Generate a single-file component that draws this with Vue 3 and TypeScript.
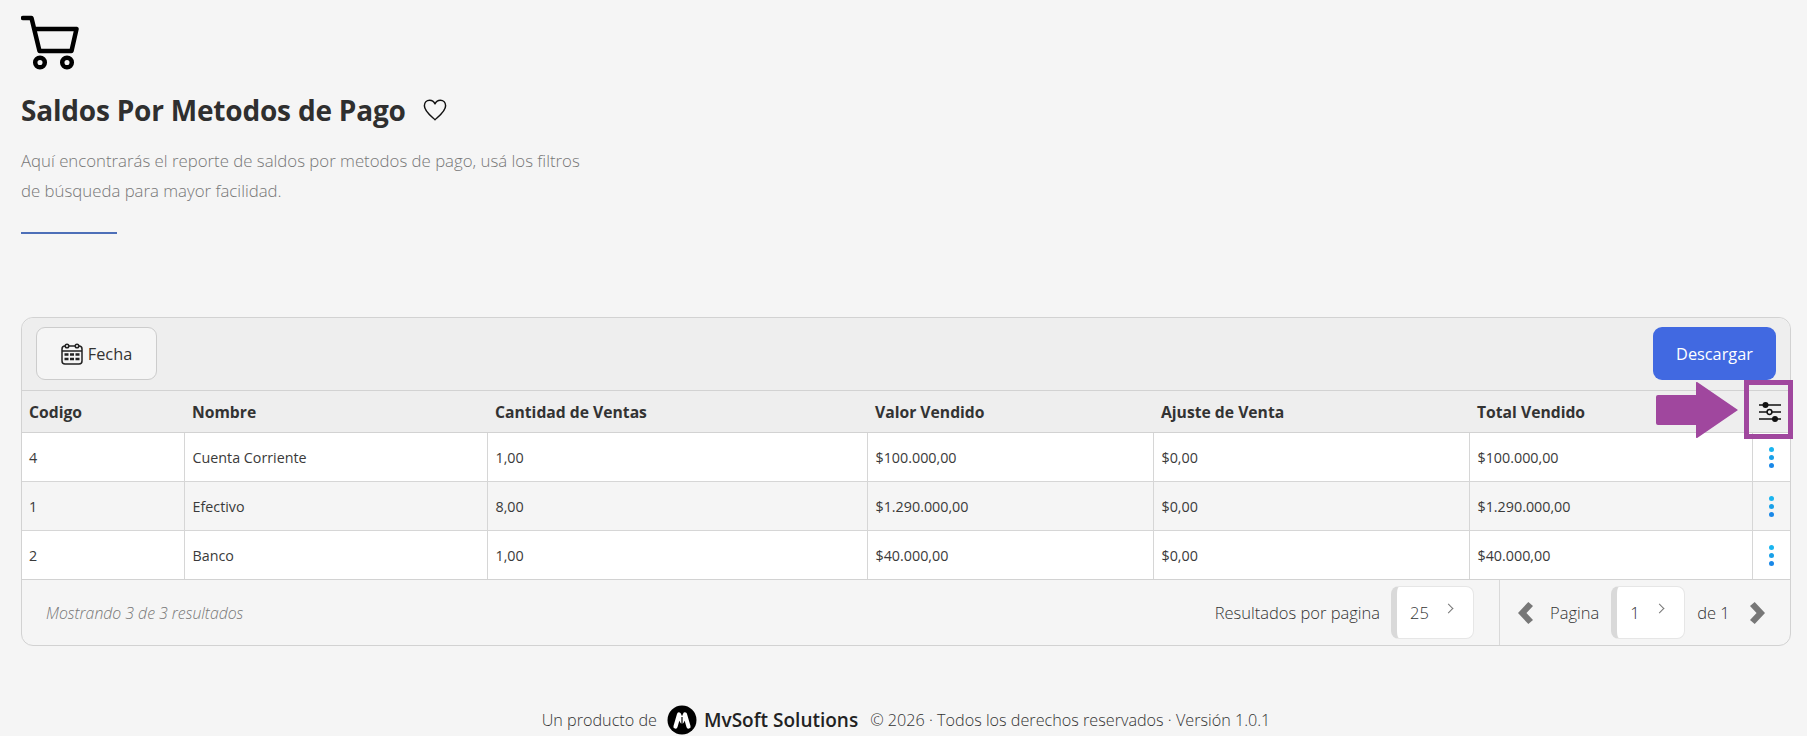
<script setup lang="ts">
interface Row { code: string; name: string; qty: string; value: string; adj: string; total: string }
const rows: Row[] = [
  { code: '4', name: 'Cuenta Corriente', qty: '1,00', value: '$100.000,00', adj: '$0,00', total: '$100.000,00' },
  { code: '1', name: 'Efectivo', qty: '8,00', value: '$1.290.000,00', adj: '$0,00', total: '$1.290.000,00' },
  { code: '2', name: 'Banco', qty: '1,00', value: '$40.000,00', adj: '$0,00', total: '$40.000,00' }
]
const heads = ['Codigo', 'Nombre', 'Cantidad de Ventas', 'Valor Vendido', 'Ajuste de Venta', 'Total Vendido']
const widths = [162, 303, 380, 286, 316, 283, 38]
</script>

<template>
  <div class="page">
    <header class="head">
      <svg class="cart" width="60" height="58" viewBox="0 0 60 58" fill="none" stroke="#000" stroke-width="4.500" stroke-linejoin="round" stroke-linecap="round">
        <path d="M2 3h8.500l8 33h32l5-22h-41" />
        <circle cx="19" cy="47.500" r="4.800" />
        <circle cx="46" cy="47.500" r="4.800" />
      </svg>
      <div class="title-row">
        <h1>Saldos Por Metodos de Pago</h1>
        <svg width="24" height="24" viewBox="0 0 26 24" fill="none" stroke="#111" stroke-width="1.600" stroke-linejoin="round">
          <path d="M13 22.500C8 18 1.500 13.500 1.500 7.500 1.500 4 4 1.500 7.200 1.500c2.500 0 4.600 1.400 5.800 3.800 1.200-2.400 3.300-3.800 5.800-3.800 3.200 0 5.700 2.500 5.700 6 0 6-6.500 10.500-11.500 15z" />
        </svg>
      </div>
      <p class="desc">Aquí encontrarás el reporte de saldos por metodos de pago, usá los filtros<br />de búsqueda para mayor facilidad.</p>
      <div class="rule"></div>
    </header>

    <section class="card">
      <div class="toolbar">
        <button class="btn-date">
          <svg width="22" height="22" viewBox="0 0 22 22" fill="none" stroke="#222" stroke-width="1.500">
            <rect x="1" y="3" width="20" height="18" rx="3" />
            <path d="M1 8h20" />
            <circle cx="6" cy="3" r="1.800" fill="#eee" />
            <circle cx="16" cy="3" r="1.800" fill="#eee" />
            <path stroke-width="2.600" d="M3.500 11.500h4M9 11.500h4M14.500 11.500h4M3.500 16h4M9 16h4M14.500 16h4" />
          </svg>
          <span>Fecha</span>
        </button>
        <button class="btn-dl">Descargar</button>
      </div>

      <table>
        <colgroup>
          <col v-for="(w, i) in widths" :key="i" :style="{ width: w + 'px' }" />
        </colgroup>
        <thead>
          <tr>
            <th v-for="h in heads" :key="h">{{ h }}</th>
            <th class="tool">
              <svg width="22" height="20" viewBox="0 0 22 20" fill="none" stroke="#111" stroke-width="1.500">
                <path d="M0 3h22M0 10h22M0 17h22" />
                <circle cx="6.500" cy="3" r="3" fill="#111" stroke="none" />
                <circle cx="10.500" cy="10" r="2.400" fill="#eee" />
                <circle cx="16" cy="17" r="3" fill="#111" stroke="none" />
              </svg>
            </th>
          </tr>
        </thead>
        <tbody>
          <tr v-for="r in rows" :key="r.code">
            <td>{{ r.code }}</td>
            <td>{{ r.name }}</td>
            <td>{{ r.qty }}</td>
            <td>{{ r.value }}</td>
            <td>{{ r.adj }}</td>
            <td>{{ r.total }}</td>
            <td class="menu"><span class="dots"><i></i><i></i><i></i></span></td>
          </tr>
        </tbody>
      </table>

      <div class="foot">
        <div class="count">Mostrando 3 de 3 resultados</div>
        <div class="per-page">
          <span>Resultados por pagina</span>
          <div class="select s25"><span>25</span><b class="chev"></b></div>
        </div>
        <div class="pager">
          <svg width="15" height="22" viewBox="0 0 16 22" preserveAspectRatio="none" fill="#777"><path d="M11 0l5 4-7 7 7 7-5 4-11-11z" /></svg>
          <span class="lbl-page">Pagina</span>
          <div class="select s1"><span>1</span><b class="chev"></b></div>
          <span>de 1</span>
          <svg class="next" width="15" height="22" viewBox="0 0 16 22" preserveAspectRatio="none" fill="#777"><path d="M5 0l-5 4 7 7-7 7 5 4 11-11z" /></svg>
        </div>
      </div>

      <div class="mark-box"></div>
      <svg class="mark-arrow" width="84" height="56" viewBox="0 0 84 56" fill="#a0479e">
        <path d="M2 13h38V1a1 1 0 0 1 1.500-.8L82 28 41.500 55.800A1 1 0 0 1 40 55V43H2a2 2 0 0 1-2-2V15a2 2 0 0 1 2-2z" />
      </svg>
    </section>

    <footer class="page-foot">
      <span>Un producto de</span>
      <svg class="logo" width="30" height="30" viewBox="0 0 30 30">
        <circle cx="15" cy="15" r="14.500" fill="#000" />
        <path d="M8.500 21.500L12 9.500l3 7 3-7 3.500 12" fill="none" stroke="#fff" stroke-width="4.200" stroke-linecap="round" stroke-linejoin="round" />
        <path d="M15 12v10" stroke="#000" stroke-width="1.200" />
      </svg>
      <strong>MvSoft Solutions</strong>
      <span>© 2026 · Todos los derechos reservados · Versión 1.0.1</span>
    </footer>
  </div>
</template>

<style>
html, body { margin: 0; background: #f5f5f5; }
</style>

<style scoped>
.page {
  height: 736px;
  overflow: hidden;
  box-sizing: border-box;
  padding: 15px 16px 0 21px;
  background: #f5f5f5;
  font-family: "Open Sans", "Noto Sans", sans-serif;
  color: #333;
}
.head { height: 302px; }
.cart { display: block; }
.title-row { display: flex; align-items: center; gap: 17px; margin-top: 18px; height: 38px; }
h1 { margin: 0; font-size: 28px; font-weight: 700; color: #2f2f2f; letter-spacing: -0.2px; line-height: 38px; }
.desc { margin: 17px 0 0; font-size: 16.800px; line-height: 30px; font-weight: 300; color: #777; }
.rule { width: 96px; height: 2px; background: #4d6fb8; margin-top: 26px; }

.card {
  position: relative;
  border: 1px solid #d2d2d2;
  border-radius: 12px;
  width: 1770px;
  box-sizing: border-box;
  background: #f5f5f5;
}
.toolbar {
  height: 72px;
  box-sizing: border-box;
  display: flex;
  justify-content: space-between;
  align-items: flex-start;
  padding: 9px 14px 0;
  background: #eee;
  border-radius: 12px 12px 0 0;
}
button { font-family: inherit; cursor: pointer; }
.btn-date {
  width: 121px;
  height: 53px;
  display: flex;
  align-items: center;
  justify-content: center;
  gap: 5px;
  background: #f5f5f5;
  border: 1px solid #ccc;
  border-radius: 9px;
  font-size: 16.300px;
  color: #333;
}
.btn-dl {
  width: 123px;
  height: 53px;
  background: #4169e1;
  color: #fff;
  border: none;
  border-radius: 9px;
  font-size: 16.300px;
  font-weight: 400;
}
table {
  width: 1768px;
  table-layout: fixed;
  border-collapse: collapse;
  font-size: 14.300px;
}
th {
  height: 42px;
  padding: 0 8px;
  text-align: left;
  background: #eee;
  border-top: 1px solid #d2d2d2;
  border-bottom: 1px solid #d2d2d2;
  font-size: 15.700px;
  font-weight: 700;
  color: #333;
  box-sizing: border-box;
}
th:first-child, td:first-child { padding-left: 7px; }
th.tool { padding: 0 3px 0 0; text-align: center; line-height: 0; }
td {
  height: 49px;
  padding: 0 8px;
  box-sizing: border-box;
  border: 1px solid #d6d6d6;
  background: #fff;
  color: #3a3a3a;
}
td:first-child { border-left: none; }
td:last-child { border-right: none; }
tbody tr:nth-child(2) td { background: #f5f5f5; }
tbody tr:last-child td { border-bottom: 1px solid #d2d2d2; }
td.menu { padding: 0; text-align: center; }
.dots { display: inline-flex; flex-direction: column; gap: 3px; vertical-align: middle; }
.dots i { width: 5px; height: 5px; border-radius: 50%; background: #1aa0e8; }
.dots i:first-child { background: #1ab5f0; }
.dots i:last-child { background: #1a88e8; }

.foot {
  height: 65px;
  display: flex;
  align-items: center;
  font-size: 16.500px;
  color: #333;
  font-weight: 300;
}
.count { flex: 1; padding-left: 24px; font-style: italic; color: #777; font-size: 15.800px; }
.per-page { display: flex; align-items: center; gap: 11px; padding-right: 25px; height: 100%; }
.pager {
  width: 291px;
  box-sizing: border-box;
  height: 100%;
  border-left: 1px solid #d9d9d9;
  display: flex;
  align-items: center;
  padding-left: 18px;
  gap: 12px;
}
.lbl-page { margin-left: 5px; }
.next { margin-left: 8px; }
.select {
  height: 53px;
  box-sizing: border-box;
  background: #fff;
  border: 1px solid #e6e6e6;
  border-left: 6px solid #d9d9d9;
  border-radius: 8px;
  display: flex;
  align-items: center;
  position: relative;
  padding-left: 13px;
  color: #333;
}
.s25 { width: 83px; }
.s1 { width: 74px; }
.chev {
  position: absolute;
  top: 18px;
  width: 6px;
  height: 6px;
  border-top: 1.500px solid #777;
  border-right: 1.500px solid #777;
  transform: rotate(45deg);
}
.s25 .chev { right: 21px; }
.s1 .chev { right: 21px; }

.mark-box {
  position: absolute;
  left: 1722px;
  top: 62px;
  width: 49px;
  height: 59px;
  box-sizing: border-box;
  border: 5px solid #a0479e;
}
.mark-arrow { position: absolute; left: 1634px; top: 64px; }

.page-foot {
  display: flex;
  justify-content: center;
  align-items: center;
  height: 30px;
  margin-top: 59px;
  font-size: 16.200px;
  font-weight: 300;
  color: #333;
  gap: 10px;
}
.logo { margin-right: -3px; }
.page-foot strong { font-size: 19px; font-weight: 600; color: #222; margin-right: 2px; }
</style>
